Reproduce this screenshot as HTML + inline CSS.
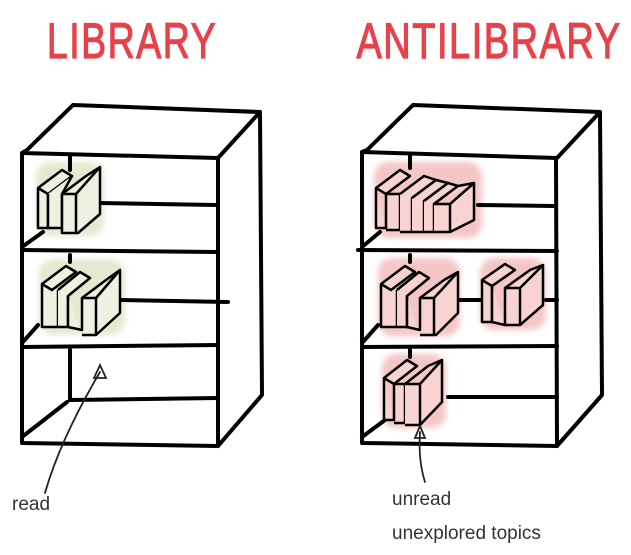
<!DOCTYPE html>
<html><head><style>
html,body{margin:0;padding:0;background:#fff;width:631px;height:555px;overflow:hidden}
svg{display:block}
</style></head><body>
<svg width="631" height="555" viewBox="0 0 631 555" xmlns="http://www.w3.org/2000/svg">
<defs><filter id="b" x="-20%" y="-20%" width="140%" height="140%"><feGaussianBlur stdDeviation="3"/></filter></defs>
<g font-family="Liberation Sans, sans-serif">
<text x="132" y="58" text-anchor="middle" font-size="50" fill="#e8414a" stroke="#e8414a" stroke-width="1.2" transform="translate(132 0) scale(0.75 1) translate(-132 0)" letter-spacing="2">LIBRARY</text>
<text x="489" y="58" text-anchor="middle" font-size="50" fill="#e8414a" stroke="#e8414a" stroke-width="1.2" transform="translate(489 0) scale(0.76 1) translate(-489 0)" letter-spacing="2">ANTILIBRARY</text>
<text x="12" y="510" font-size="19" fill="#333">read</text>
<text x="392" y="505" font-size="19" fill="#333">unread</text>
<text x="392" y="539" font-size="19" fill="#333">unexplored topics</text>
</g>

<g fill="#e4ead2" stroke="none" filter="url(#b)">
<rect x="36" y="162" width="68" height="74" rx="14"/>
<rect x="39" y="259" width="86" height="76" rx="14"/>
</g>
<g fill="#f5c6c6" stroke="none" filter="url(#b)">
<rect x="374" y="162" width="108" height="76" rx="14"/>
<rect x="378" y="258" width="82" height="78" rx="14"/>
<rect x="480" y="258" width="66" height="72" rx="14"/>
<rect x="382" y="354" width="64" height="74" rx="14"/>
</g>

<!-- LEFT BOOKSHELF -->
<g fill="none" stroke="#000" stroke-width="4" stroke-linecap="round" stroke-linejoin="round">
<path d="M27 150 L73 105 L260 112 L218 158 L22 153 Z"/>
<path d="M22 153 L22 443 L218 446 L218 158"/>
<path d="M260 112 L262 395 L218 446"/>
<path d="M22 250 L218 252"/>
<path d="M22 347 L218 345"/>
<path d="M100 203 L216 205"/>
<path d="M122 300 L228 302"/>
<path d="M70 400 L218 398"/>
<path d="M70 155 L70 170 M70 255 L70 262 M70 350 L70 400"/>
<path d="M22 247 L43 232 M22 343 L38 325 M22 437 L67 402"/>
</g>
<g fill="#eef1e2" stroke="#000" stroke-width="2.5" stroke-linejoin="round">
<path d="M38 188 L62 170 L72 176 L48 194 Z M38 188 L38 228 L48 228 L48 194"/>
<path d="M48 194 L48 228 L62 228 L62 194 L72 176"/>
<path d="M62 194 L86 176 L100 167 L100 214 L78 233 L62 233 Z M62 194 L76 194 L76 233 M76 194 L100 167"/>
<path d="M42 284 L66 266 L76 272 L52 290 Z M42 284 L42 327 L58 327 L58 290"/>
<path d="M58 290 L80 272 L90 278 L68 296 L68 327 L58 327"/>
<path d="M68 296 L68 327 L82 330 L82 298 L106 280 L120 270 L120 313 L96 335 L82 335 M82 298 L96 298 L96 335 M96 298 L120 270"/>
</g>
<g fill="none" stroke="#222" stroke-width="1.8" stroke-linecap="round">
<path d="M45 493 Q60 440 100 372"/>
<path d="M94 378 L100 365 L106 378 Z"/>
</g>

<!-- RIGHT BOOKSHELF -->
<g fill="none" stroke="#000" stroke-width="4" stroke-linecap="round" stroke-linejoin="round">
<path d="M367 150 L413 105 L600 112 L557 158 L362 152 Z"/>
<path d="M362 152 L362 443 L557 446 L556 158"/>
<path d="M600 112 L602 395 L557 446"/>
<path d="M358 250 L557 251"/>
<path d="M362 347 L557 346"/>
<path d="M478 205 L553 206"/>
<path d="M458 300 L482 300 M546 300 L557 300"/>
<path d="M448 397 L557 397"/>
<path d="M410 155 L410 168 M410 255 L410 262 M410 350 L410 357"/>
<path d="M362 247 L380 232 M362 343 L378 325 M362 437 L385 420"/>
</g>
<g fill="#f9d2d2" stroke="#000" stroke-width="2.5" stroke-linejoin="round">
<path d="M376 188 L400 170 L410 176 L386 194 Z M376 188 L376 228 L386 228 L386 194 L400 194 L400 230 L386 230"/>
<path d="M400 194 L424 176 L436 180 L412 198 L412 232 L400 232"/>
<path d="M412 198 L436 180 L448 183 L424 201 L424 232 L412 232"/>
<path d="M424 201 L448 183 L458 186 L434 204 L434 232 L424 232"/>
<path d="M434 204 L458 186 L474 183 L474 220 L450 232 L434 232 M450 204 L450 232 M434 204 L450 204 L474 183"/>
<path d="M381 284 L405 266 L415 272 L391 290 Z M381 284 L381 327 L397 327 L397 290"/>
<path d="M397 290 L419 272 L429 278 L407 296 L407 327 L397 327"/>
<path d="M407 296 L407 327 L420 330 L420 298 L444 280 L458 272 L458 313 L436 335 L420 335 M420 298 L434 298 L434 335 M434 298 L458 272"/>
<path d="M482 280 L505 264 L515 270 L492 286 Z M482 280 L482 322 L492 322 L492 286"/>
<path d="M492 286 L492 322 L505 325 L505 288 L530 270 L543 265 L543 305 L520 325 L505 325 M505 288 L520 288 L520 325 M520 288 L543 265"/>
<path d="M384 378 L407 360 L417 366 L394 384 Z M384 378 L384 420 L394 420 L394 384 L405 384 L405 423 L394 423"/>
<path d="M405 384 L428 366 L442 360 L442 402 L420 425 L405 425 M420 384 L420 425 M405 384 L420 384 L442 360"/>
</g>
<g fill="none" stroke="#222" stroke-width="1.8" stroke-linecap="round">
<path d="M425 482 Q418 460 420 432"/>
<path d="M415 438 L420 426 L425 438 Z"/>
</g>
</svg>
</body></html>
